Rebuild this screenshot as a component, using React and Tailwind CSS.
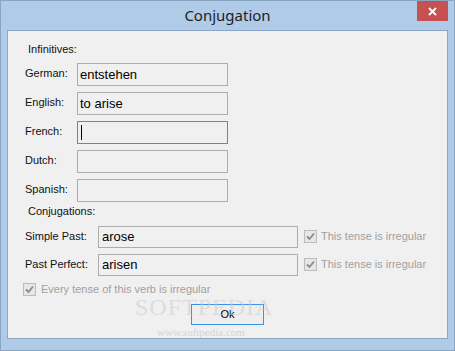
import React from "react";

const Check = () => (
  <div className="w-[13px] h-[13px] border border-[#bcbcbc] bg-[#e6e6e6] flex items-center justify-center shrink-0">
    <svg width="9" height="9" viewBox="0 0 9 9">
      <path d="M1 4.5 L3.5 7 L8 1.5" stroke="#8a8a8a" strokeWidth="1.8" fill="none" />
    </svg>
  </div>
);

const InfRow = ({ label, value }) => (
  <div className="flex items-center h-[23px] pl-[17px]">
    <div className="w-[52px] text-[11px] leading-[13px] text-[#111] pb-[2px]">{label}</div>
    <div className="w-[151px] h-[23px] border border-[#adadad] flex items-center pl-[2px] text-[13px] text-black bg-[#f0f0f0]">
      {value}
    </div>
  </div>
);

const FocusRow = ({ label }) => (
  <div className="flex items-center h-[23px] pl-[17px]">
    <div className="w-[52px] text-[11px] leading-[13px] text-[#111] pb-[2px]">{label}</div>
    <div className="w-[151px] h-[23px] border border-[#3c93e6] flex items-center pl-[3px] bg-[#f0f0f0]">
      <div className="w-px h-[15px] bg-[#000]" />
    </div>
  </div>
);

const ConjRow = ({ label, value }) => (
  <div className="flex items-center h-[22px] pl-[17px]">
    <div className="w-[73px] text-[11px] leading-[13px] text-[#111] pb-[2px]">{label}</div>
    <div className="w-[200px] h-[22px] border border-[#adadad] flex items-center pl-[3px] text-[13px] text-black bg-[#f0f0f0]">
      {value}
    </div>
    <div className="ml-[6px] pb-[1px] flex items-center">
      <Check />
      <span className="ml-[4px] text-[11px] leading-[13px] text-[#a0a0a0]">This tense is irregular</span>
    </div>
  </div>
);

export default function App() {
  return (
    <div
      className="w-[455px] h-[351px] bg-[#afcbe8] border border-[#8aa4c4] flex flex-col overflow-hidden"
      style={{ fontFamily: '"Liberation Sans", Arial, sans-serif' }}
    >
      <div className="h-[29px] shrink-0 relative flex items-center justify-center">
        <span
          className="text-[15px] text-[#1e1e1e] pb-[1px]"
          style={{ fontFamily: '"Noto Sans", "Open Sans", sans-serif' }}
        >
          Conjugation
        </span>
        <div className="absolute right-[6px] top-0 w-[31px] h-[20px] bg-[#c75050] flex items-center justify-center">
          <svg width="9" height="9" viewBox="0 0 9 9">
            <path d="M1 1 L8 8 M8 1 L1 8" stroke="white" strokeWidth="1.8" />
          </svg>
        </div>
      </div>
      <div className="mx-[6px] h-[309px] shrink-0 border border-[#8ea7c5] bg-[#f0f0f0] relative flex flex-col pt-[12px]">
        <div className="pl-[20px] text-[11px] leading-[13px] text-[#111]">Infinitives:</div>
        <div className="mt-[7px] flex flex-col gap-[6px]">
          <InfRow label="German:" value="entstehen" />
          <InfRow label="English:" value="to arise" />
          <FocusRow label="French:" />
          <InfRow label="Dutch:" value="" />
          <InfRow label="Spanish:" value="" />
        </div>
        <div className="mt-[3px] pl-[20px] text-[11px] leading-[13px] text-[#111]">Conjugations:</div>
        <div className="mt-[8px] flex flex-col gap-[6px]">
          <ConjRow label="Simple Past:" value="arose" />
          <ConjRow label="Past Perfect:" value="arisen" />
        </div>
        <div className="mt-[7px] pl-[15px] flex items-center">
          <Check />
          <span className="ml-[5px] text-[11px] leading-[13px] text-[#a0a0a0]">
            Every tense of this verb is irregular
          </span>
        </div>
        <div className="mt-[8px] self-center w-[73px] h-[21px] border border-[#3c93e6] bg-[#eeeeee] flex items-center justify-center text-[11px] text-black">
          Ok
        </div>
        <div
          className="absolute left-[127px] top-[264px] text-[24px] leading-[24px] tracking-[1px] text-[#c8c8c8]/50 pointer-events-none"
          style={{ fontFamily: '"Liberation Serif", serif' }}
        >
          SOFTPEDIA
        </div>
        <div
          className="absolute left-[149px] top-[295px] text-[11px] leading-[12px] text-[#d4d4d4]"
          style={{ fontFamily: '"Liberation Serif", serif' }}
        >
          www.softpedia.com
        </div>
      </div>
    </div>
  );
}
